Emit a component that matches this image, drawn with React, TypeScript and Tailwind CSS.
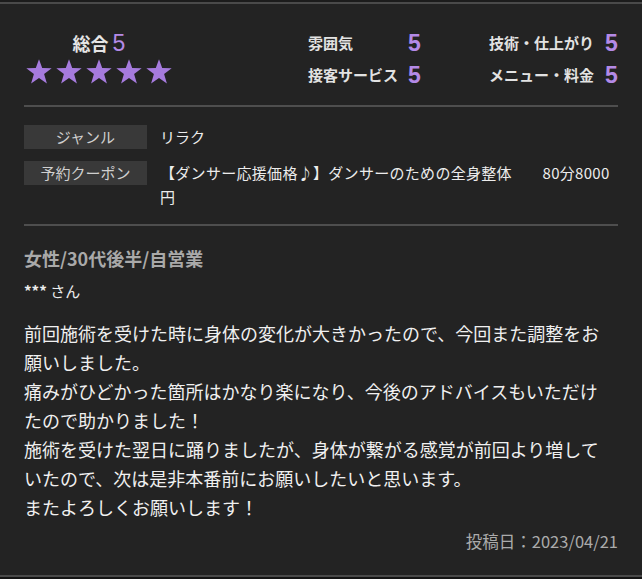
import React from "react";

const Star = () => (
  <svg width="26" height="25" viewBox="0 0 26 25">
    <polygon
      points="13,0.3 16.2,9.1 25.7,9.3 18.1,15 20.9,24.5 13,18.9 5.1,24.5 7.9,15 0.3,9.3 9.8,9.1"
      fill="#a67bde"
    />
  </svg>
);

const num = "text-[#b48ae6] text-[23px] leading-[24px] font-['Liberation_Sans',sans-serif]";

export default function App() {
  return (
    <div
      className="w-[642px] h-[579px] bg-[#141414] overflow-hidden"
      style={{ fontFamily: "'Noto Sans CJK JP', 'Noto Sans', sans-serif" }}
    >
      <div className="h-[2px] bg-[#1c1c1c]" />
      <div className="border-t-2 border-b-2 border-[#4a4a4a] bg-[#232323] h-[575px] px-[24px] text-[#ececec]">
        {/* Top ratings */}
        <div className="flex items-start pt-[27px] pb-[18px]">
          <div className="w-[150px] flex flex-col items-center">
            <div className="flex items-center h-[24px]">
              <span className="text-[18px] font-bold leading-[24px] text-[#e6e6e6]">総合</span>
              <span className={num + " ml-[4px]"}>5</span>
            </div>
            <div className="flex gap-[4px] mt-[4px]">
              <Star />
              <Star />
              <Star />
              <Star />
              <Star />
            </div>
          </div>
          <div className="ml-[134px] grid grid-cols-[100px_12px_69px_116px_12px] gap-y-[8px] text-[15px] leading-[24px] font-bold text-[#e2e2e2]">
            <span>雰囲気</span>
            <span className={num}>5</span>
            <span />
            <span>技術・仕上がり</span>
            <span className={num}>5</span>
            <span>接客サービス</span>
            <span className={num}>5</span>
            <span />
            <span>メニュー・料金</span>
            <span className={num}>5</span>
          </div>
        </div>
        <div className="h-[2px] bg-[#4e4e4e]" />

        {/* Info */}
        <div className="pt-[18px] pb-[15px] flex flex-col gap-[12px] text-[15px] leading-[24px]">
          <div className="flex items-start">
            <div className="w-[123px] h-[24px] bg-[#393939] text-[#cfcfcf] text-center">ジャンル</div>
            <div className="ml-[13px] text-[#ececec]">リラク</div>
          </div>
          <div className="flex items-start">
            <div className="w-[123px] h-[24px] bg-[#393939] text-[#cfcfcf] text-center shrink-0">予約クーポン</div>
            <div className="ml-[13px] w-[452px] tracking-[0.3px] text-[#ececec]">
              【ダンサー応援価格♪】ダンサーのための全身整体　　80分8000円
            </div>
          </div>
        </div>
        <div className="h-[2px] bg-[#4e4e4e]" />

        {/* Review */}
        <div className="pt-[20px]">
          <div className="text-[18px] font-bold leading-[24px] text-[#a9a9a9]">女性/30代後半/自営業</div>
          <div className="mt-[9px] text-[15px] leading-[24px] text-[#ececec]">
            <span className="font-bold">***</span> さん
          </div>
          <div className="mt-[16px] w-[582px] text-[18px] leading-[29px] text-[#f0f0f0]">
            <p>前回施術を受けた時に身体の変化が大きかったので、今回また調整をお願いしました。</p>
            <p>痛みがひどかった箇所はかなり楽になり、今後のアドバイスもいただけたので助かりました！</p>
            <p>施術を受けた翌日に踊りましたが、身体が繋がる感覚が前回より増していたので、次は是非本番前にお願いしたいと思います。</p>
            <p>またよろしくお願いします！</p>
          </div>
          <div className="mt-[7px] text-right text-[16.5px] leading-[24px] text-[#ababab]">投稿日：2023/04/21</div>
        </div>
      </div>
    </div>
  );
}
